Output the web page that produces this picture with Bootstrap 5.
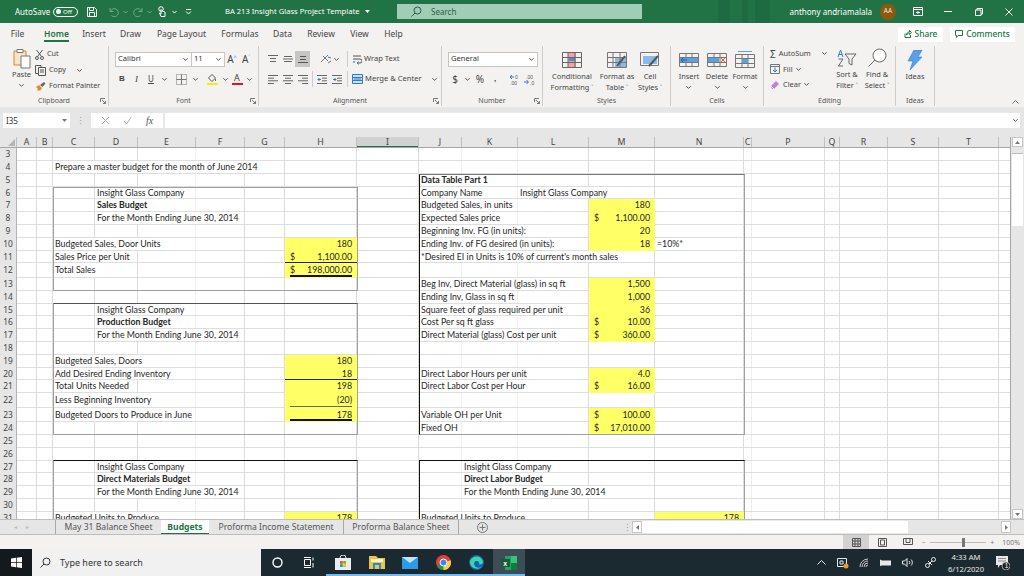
<!DOCTYPE html>
<html lang="en"><head><meta charset="utf-8"><title>BA 213 Insight Glass Project Template</title>
<link href="https://cdn.jsdelivr.net/npm/bootstrap@5.3.0/dist/css/bootstrap.min.css" rel="stylesheet">
<style>
html,body{margin:0;width:1024px;height:576px;overflow:hidden;background:#f3f2f1}
body{font-family:"Noto Sans","Liberation Sans",sans-serif;font-size:8px;color:#444;line-height:1}
svg{display:block;flex:none}
.ctr{display:flex;align-items:center;justify-content:center;white-space:nowrap}
/* title bar */
.xtitle{height:23px;background:#217346;color:#fff;padding-left:15px;display:grid;align-items:center;position:relative;
 grid-template-columns:38px 25px 28px 24px 25px 14px 10px 18px 176px 269px 234px 23px 38px 22px 40px 20px;
 background-image:linear-gradient(90deg,#1f6b41 0,#1f6b41 100%),linear-gradient(90deg,#1f6b41 0,#1f6b41 100%),linear-gradient(90deg,#1f6b41 0,#1f6b41 100%);
 background-size:12px 23px,6px 23px,15px 23px;background-position:718px 0,742px 0,755px 0;background-repeat:no-repeat}
.xtoggle{width:25px;height:10px;border:1px solid #fff;border-radius:6px;display:flex;align-items:center;padding-left:2px;gap:2px;font-size:6px}
.xknob{width:5px;height:5px;border-radius:50%;background:#fff}
.xsearch{margin-left:24px;width:245px;height:15px;background:#a0cdb6;color:#2f5d47;display:flex;align-items:center;gap:9px;padding-left:14px;font-size:8px}
.xavatar{width:16px;height:16px;border-radius:50%;background:#8a5a10;color:#f5e9d5;font-size:6.5px;margin-left:4px}
.xttl{padding-left:28px;gap:6px;justify-content:flex-start;font-size:7.6px}
/* tabs */
.xtabs{height:22px;display:flex;justify-content:space-between;align-items:center;padding-right:9px}
.xtablist{display:grid;grid-template-columns:35px 43px 32px 41px 61px 56px 29px 48px 29px 39px;font-size:8.5px;height:22px;align-items:center;justify-items:center}
.xon{font-weight:600;color:#217346;position:relative;height:22px;display:flex;align-items:center}
.xon::after{content:"";position:absolute;left:0;right:0;bottom:3px;height:2px;background:#217346}
.xbtns{display:flex;gap:7px}
.xbtn{background:#fff;color:#217346;height:15px;display:flex;align-items:center;justify-content:center;gap:3px;font-size:8.4px;font-weight:500}
.xshare{width:45px}.xcomm{width:65px}
/* ribbon */
.xrib{height:62px;display:flex;position:relative;padding-top:1px}
.xg{height:60px;border-right:1px solid #cfcdcb;display:flex;flex-direction:column;flex:none}
.xbody{height:51px}
.xlab{height:9px;text-align:center;font-size:7px;color:#555;position:relative}
.xlaunch{position:absolute;right:2px;top:1px}
.g1{width:109px}.g2{width:150px}.g3{width:183px}.g4{width:101px}.g5{width:128px}.g6{width:93px}.g7{width:132px}.g8{width:39px}
.xclip{display:grid;grid-template-columns:35px 1fr}
.xpaste{display:flex;flex-direction:column;align-items:center;padding:2px 0 0 8px;font-size:7.4px;gap:2px}
.xclipr{display:grid;grid-auto-rows:16px;align-items:center;font-size:7.3px}
.xci{display:flex;align-items:center;gap:3px;white-space:nowrap}
.xrows{padding:5px 0 0 6px;display:grid;grid-template-rows:16px 16px;row-gap:4px;align-content:start}
.xr{display:grid;align-items:center;justify-items:center}
.f1{grid-template-columns:76px 34px 14px 14px}
.f2{grid-template-columns:14px 15px 14px 12px 2px 18px 10px 3px 18px 8px 16px 8px}
.a1,.a2{grid-template-columns:15px 15px 15px 4px 15px 16px 2px 1px 5px 1fr}
.a1o{grid-column:5/7;display:flex;align-items:center;gap:2px}
.n1{grid-template-columns:90px}
.n2{grid-template-columns:14px 10px 16px 14px 6px 15px 14px}
.xsel{width:100%;height:15px;background:#fff;border:1px solid #c8c6c4;display:flex;align-items:center;justify-content:space-between;padding:0 3px 0 2px;font-size:7.6px;color:#333}
.f1 .xsel:first-child{border-right:0}
.xb{font-weight:700;font-family:"Liberation Sans",sans-serif;font-size:8px;color:#444}
.xi{font-style:italic;font-family:"Liberation Serif",serif;font-size:9px}
.xu{text-decoration:underline;font-size:8px}
.xa{font-size:10px;color:#444}
.xa small{font-size:5.5px;color:#2b7cd3;vertical-align:4px}
.xpick{display:flex;flex-direction:column;align-items:center;font-size:9px;line-height:9px;color:#444;width:12px}
.xpick i{display:block;width:11px;height:2px;margin-top:1px}
.xye{background:#ffeb00}.xre{background:#e81123}
.xsbox{background:#c8c6c4;width:15px;height:16px;display:flex;align-items:center;justify-content:center}
.xtxt{display:flex;align-items:center;gap:2px;white-space:nowrap;font-size:7.6px;justify-self:start;margin-left:-1px}
.xvline{width:1px;height:16px;background:#cfcdcb}
.xcols{display:grid;padding-top:2px;justify-items:center;align-content:start}
.c5{grid-template-columns:58px 32px 34px}.c6{grid-template-columns:36px 20px 36px}.c7r{display:grid;grid-template-columns:68px 30px 30px;align-content:start}.c8{grid-template-columns:38px}
.xcol{display:flex;flex-direction:column;align-items:center;font-size:7.4px;line-height:11px;white-space:nowrap;padding-top:2px}
.xico{height:20px;display:flex;align-items:center;justify-content:center;margin-bottom:1px}
.xedit{display:grid;grid-auto-rows:15.5px;padding-left:6px;font-size:7.4px;align-items:center;justify-items:start}
.xcoll{position:absolute;right:5px;bottom:3px}
/* formula bar */
.xfx{height:30px;background:#e6e6e6;padding:6px 4px 9px 3px;display:grid;grid-template-columns:67px 21px 72px 2px 1fr}
.xfbox{background:#fff;height:15px;display:flex;align-items:center;font-size:8px;color:#333;padding:0 3px}
.xname{justify-content:space-between}
.xdots{color:#999;text-align:center;line-height:15px;font-size:9px}
.xact{justify-content:space-around}
.xact em{font-family:"Liberation Serif",serif;font-size:10px;color:#555}
.xinp{grid-column:5;justify-content:flex-end;padding-right:2px}
/* sheet */
.xsheet{height:382px;display:flex;background:#e6e6e6}
.xgrid{width:1011px;height:382px;position:relative;overflow:hidden;background:#fff;font-family:Lato,"Liberation Sans",sans-serif;font-size:8.8px;color:#262626;flex:none;border-right:1px solid #a6a6a6}
.xrw{--c:17px 20px 16px 42px 43px 58px 49px 40px 72px 62px 43px 56px 71px 66px 89px 8px 73px 15px 48px 51px 60px 12px;
 display:grid;grid-template-columns:var(--c);grid-template-rows:1fr;height:12.8px;border-bottom:1px solid #dedede;
 --s:#dcdcdc;--f:#efefef;
 background:
 linear-gradient(var(--s),var(--s)) 36px 0/1px 100% no-repeat,linear-gradient(var(--s),var(--s)) 52px 0/1px 100% no-repeat,
 linear-gradient(var(--s),var(--s)) 94px 0/1px 100% no-repeat,linear-gradient(var(--s),var(--s)) 137px 0/1px 100% no-repeat,
 linear-gradient(var(--f),var(--f)) 195px 0/1px 100% no-repeat,linear-gradient(var(--s),var(--s)) 244px 0/1px 100% no-repeat,
 linear-gradient(var(--s),var(--s)) 284px 0/1px 100% no-repeat,linear-gradient(var(--s),var(--s)) 356px 0/1px 100% no-repeat,
 linear-gradient(var(--s),var(--s)) 418px 0/1px 100% no-repeat,linear-gradient(var(--f),var(--f)) 461px 0/1px 100% no-repeat,
 linear-gradient(var(--f),var(--f)) 517px 0/1px 100% no-repeat,linear-gradient(var(--s),var(--s)) 588px 0/1px 100% no-repeat,
 linear-gradient(var(--s),var(--s)) 654px 0/1px 100% no-repeat,linear-gradient(var(--s),var(--s)) 743px 0/1px 100% no-repeat,
 linear-gradient(var(--f),var(--f)) 751px 0/1px 100% no-repeat,linear-gradient(var(--s),var(--s)) 824px 0/1px 100% no-repeat,
 linear-gradient(var(--s),var(--s)) 839px 0/1px 100% no-repeat,linear-gradient(var(--s),var(--s)) 887px 0/1px 100% no-repeat,
 linear-gradient(var(--s),var(--s)) 938px 0/1px 100% no-repeat,linear-gradient(var(--s),var(--s)) 998px 0/1px 100% no-repeat}
.xrw>*{grid-row:1;line-height:11.8px;white-space:nowrap}
.xtall{height:14.5px}
.xtall>*{line-height:13.5px}
.xhead{height:11.3px;background:#e6e6e6;border-bottom:1px solid #a6a6a6;color:#444;font-family:"Noto Sans",sans-serif;font-size:8.8px}
.xhead>*{line-height:10.3px;text-align:center;border-right:1px solid #c0c0c0}
.xcorn{position:relative}
.xcorn::after{content:"";position:absolute;right:1px;bottom:1px;border-style:solid;border-width:0 0 7px 7px;border-color:transparent transparent #b4b4b4 transparent}
.xselh{background:#d2d2d2;box-shadow:inset 0 -1px 0 #217346}
.xn{grid-column:1;background:#e6e6e6;border-right:1px solid #b4b4b4;text-align:center;color:#444;font-family:"Noto Sans",sans-serif;font-size:8.4px;margin-bottom:-1px}
.xt{padding:0 2px;background:#fff;justify-self:start}
.cC{grid-column:4}.cD{grid-column:5}.cH{grid-column:9}.cJ{grid-column:11}.cK{grid-column:12}.cL{grid-column:13}.cM{grid-column:14}.cN{grid-column:15}
.xy{background:#ffff66;display:flex;justify-content:flex-end;padding:0 5px;margin-bottom:-1px;position:relative}
.xd{justify-content:space-between}
.xline{border-bottom:1px solid #222}
.xund::after{content:"";position:absolute;left:5px;right:5px;bottom:1px;height:1px;background:#666}
.xdbl::after{content:"";position:absolute;left:5px;right:5px;bottom:1px;height:2px;background:#111}
.xbox{position:absolute;border:1px solid #a0a0a0;pointer-events:none}
.b1{left:53px;top:49.7px;width:305px;height:104.6px}
.b2{left:53px;top:166.3px;width:305px;height:132px;border-top-color:#555}
.b3{left:53px;top:323px;width:305px;height:90px;border-top-color:#111}
.b4{left:419px;top:37px;width:326px;height:261.3px;border-left-color:#111;border-top-color:#777}
.b5{left:419px;top:323px;width:326px;height:90px;border-top-color:#111;border-left-color:#111}
.xvs{width:13px;height:382px;display:flex;flex-direction:column;background:#e6e6e6;padding-left:1px}
.xarrow{height:10px;width:11px;background:#fff;border:1px solid #c8c6c4;display:flex;align-items:center;justify-content:center;flex:none}
.xthumb{height:73px;width:11px;background:#fff;border-top:1px solid #bbb;margin:6px 0 auto;flex:none}
/* sheet tabs */
.xstabs{height:16px;background:#e6e6e6;border-bottom:1px solid #bdbdbd;border-top:1px solid #bdbdbd;display:flex;align-items:center;font-size:8.6px;color:#555;position:relative}
.xnavs{width:55px;display:flex;gap:9px;padding-left:14px;color:#bbb;font-size:6px}
.xst{height:14px;display:flex;align-items:center;justify-content:center;white-space:nowrap;border-left:1px solid #aaa;flex:none}
.t1{width:106px}.t2{width:48px;background:#fff;color:#217346;font-weight:700;border-left:0;box-shadow:inset 0 -1px 0 #217346}.t3{width:134px;border-left:0}.t4{width:115px}
.xplus{width:47px;border-left:1px solid #aaa;height:14px;display:flex;align-items:center;justify-content:center}
.xhs{margin-left:auto;display:flex;align-items:center;width:402px;height:13px;padding-right:13px}
.xhd{width:10px;color:#999;text-align:center;font-size:9px}
.xhtrack{flex:1;height:12px;background:#fff;display:flex}
.xharr{width:10px;height:12px;background:#fff;border:1px solid #c8c6c4;display:flex;align-items:center;justify-content:center;flex:none}
.xhg{width:93px;flex:none}
/* status */
.xstat{height:14px;background:#f3f2f1;display:flex;justify-content:flex-end;align-items:center;font-size:7px;color:#777}
.xvw{width:26px;height:14px;display:flex;align-items:center;justify-content:center}
.xvon{background:#d2d2d2}
.xzoom{display:flex;align-items:center;width:104px;padding:0 4px 0 2px;margin-left:-1px}
.xsl{flex:1;height:1px;background:#bbb;margin:0 4px;position:relative}
.xsl::after{content:"";position:absolute;left:32px;top:-4px;width:3px;height:9px;background:#777}
/* taskbar */
.xbar{height:27px;background:#1b2a30;display:grid;grid-template-columns:32px 229px 32px 33px 34px 33px 34px 33px 33px 32px 286px 21px 21px 22px 21px 22px 24px 48px 26px 8px;color:#fff;align-items:center;justify-items:center}
.xstart{background:#14191d;height:27px;width:100%;display:flex;align-items:center;justify-content:center}
.xsrch{background:#f1f1f1;height:27px;width:100%;display:flex;align-items:center;gap:9px;padding-left:8px;color:#333;font-size:9px}
.xapp{height:27px;width:100%;display:flex;align-items:center;justify-content:center;box-shadow:inset 0 -2px 0 #76b9ed}
.xapp0{height:27px;width:100%;display:flex;align-items:center;justify-content:center}
.xact1{background:#3d4d55}
.xclock{font-size:7.6px;line-height:12px;text-align:center;color:#e8e8e8;white-space:nowrap}
</style></head>
<body>
<div class="xtitle">
 <span>AutoSave</span>
 <span class="xtoggle"><span class="xknob"></span>Off</span>
 <span class="ctr"><svg width="12" height="12" viewBox="0 0 12 12" fill="none" stroke="#fff"><path d="M1.5 1.5h7l2 2v7h-9z"/><path d="M3.5 1.5v3h4v-3M3.5 10.5v-4h5v4"/></svg></span>
 <span class="ctr gap-1"><svg width="10" height="10" viewBox="0 0 10 10" fill="none" stroke="#6fa98a"><path d="M1 1v3.500h3.500M1.500 4.500a4 4 0 1 1 1 4"/></svg><svg width="5" height="4" viewBox="0 0 5 4" fill="none" stroke="#6fa98a"><path d="M.5 1l2 2 2-2"/></svg></span>
 <span class="ctr gap-1"><svg width="10" height="10" viewBox="0 0 10 10" fill="none" stroke="#6fa98a"><path d="M9 1v3.500H5.500M8.500 4.500a4 4 0 1 0-1 4"/></svg><svg width="5" height="4" viewBox="0 0 5 4" fill="none" stroke="#6fa98a"><path d="M.5 1l2 2 2-2"/></svg></span>
 <span class="ctr"><svg width="10" height="12" viewBox="0 0 10 12" fill="none" stroke="#fff"><circle cx="4" cy="3" r="2.300"/><path d="M4 3v5l-1.500-1L4 10.500h4V6L5 5"/></svg></span>
 <span class="ctr"><svg width="5" height="4" viewBox="0 0 5 4" fill="none" stroke="#fff"><path d="M.5 1l2 2 2-2"/></svg></span>
 <span class="ctr"><svg width="7" height="6" viewBox="0 0 7 6" fill="none" stroke="#fff"><path d="M1 .5h5M1 2.500l2.500 2.500L6 2.500"/></svg></span>
 <span class="ctr xttl">BA 213 Insight Glass Project Template <svg width="5" height="3" viewBox="0 0 5 3" fill="#fff"><path d="M0 0h5L2.500 3z"/></svg></span>
 <span class="xsearch"><svg width="11" height="11" viewBox="0 0 11 11" fill="none" stroke="#2f5d47"><circle cx="6.500" cy="4.500" r="3.500"/><path d="M4 7l-3.500 3.500"/></svg>Search</span>
 <span class="text-end pe-1">anthony andriamalala</span>
 <span class="ctr xavatar">AA</span>
 <span class="ctr"><svg width="10" height="9" viewBox="0 0 10 9" fill="none" stroke="#fff"><path d="M.5.500h9v8h-9zM.5 2.500h9M3 5.500h4M5 4v3"/></svg></span>
 <span class="ctr"><svg width="8" height="1" viewBox="0 0 8 1"><path d="M0 0h8v1H0z" fill="#fff"/></svg></span>
 <span class="ctr"><svg width="8" height="8" viewBox="0 0 8 8" fill="none" stroke="#fff"><path d="M.5 2h5.500v5.500H.5zM2 2V.500h5.500V6H6"/></svg></span>
 <span class="ctr"><svg width="8" height="8" viewBox="0 0 8 8" fill="none" stroke="#fff"><path d="M.5.500l7 7M7.500.500l-7 7"/></svg></span>
</div>

<div class="xtabs">
 <div class="xtablist"><span>File</span><span class="xon">Home</span><span>Insert</span><span>Draw</span><span>Page Layout</span><span>Formulas</span><span>Data</span><span>Review</span><span>View</span><span>Help</span></div>
 <div class="xbtns">
  <span class="xbtn xshare"><svg width="8" height="8" viewBox="0 0 8 8" fill="none" stroke="#217346"><path d="M1 3.500v4h5.500V5M2.500 5c0-2 1.500-3 3-3V.500L7.500 2.700 5.500 4.500V3.200c-1.500 0-2.500.6-3 1.800z"/></svg>Share</span>
  <span class="xbtn xcomm"><svg width="8" height="8" viewBox="0 0 8 8" fill="none" stroke="#217346"><path d="M.5.500h7v5H3L1.500 7.500v-2h-1z"/></svg>Comments</span>
 </div>
</div>

<div class="xrib">
 <div class="xg g1">
  <div class="xbody xclip">
   <div class="xpaste">
    <svg width="19" height="21" viewBox="0 0 19 21" fill="none"><path d="M2 3h12v14H2z" fill="#f7e3c6" stroke="#d98a2b"/><path d="M5 1.500h6v3H5z" fill="#fff" stroke="#777"/><path d="M9 8h9v12H9z" fill="#fff" stroke="#777"/></svg>
    <span>Paste</span>
    <svg class="mt-1" width="5" height="3" viewBox="0 0 5 3" fill="none" stroke="#555"><path d="M.3.300l2.200 2 2.200-2"/></svg>
   </div>
   <div class="xclipr">
    <div class="xci"><svg width="9" height="11" viewBox="0 0 9 11" fill="none" stroke="#555"><path d="M1.500 1l5 6.500M7.500 1l-5 6.500"/><circle cx="2" cy="9" r="1.500"/><circle cx="7" cy="9" r="1.500"/></svg>Cut</div>
    <div class="xci"><svg width="11" height="11" viewBox="0 0 11 11" fill="none" stroke="#555"><path d="M.5.500h5.500v8H.5z"/><path d="M3.500 2.500h7v8h-7z" fill="#f3f2f1"/><path d="M5 5h4M5 7h4"/></svg>Copy <svg class="ms-2" width="5" height="3" viewBox="0 0 5 3" fill="none" stroke="#555"><path d="M.3.300l2.200 2 2.200-2"/></svg></div>
    <div class="xci"><svg width="11" height="11" viewBox="0 0 11 11"><path d="M1 6l3-2 3 3-2 3-1-1-1 1-1-1 1-1z" fill="#e08a2b"/><path d="M5 4l4-3 1.500 1.500L7.500 6z" fill="#666"/></svg>Format Painter</div>
   </div>
  </div>
  <div class="xlab">Clipboard<svg class="xlaunch" width="6" height="6" viewBox="0 0 6 6" fill="none" stroke="#777"><path d="M.5 4V.500H5M2 2l3.500 3.500M5.500 3v2.500H3"/></svg></div>
 </div>
 <div class="xg g2">
  <div class="xbody xrows">
   <div class="xr f1"><span class="xsel">Calibri<svg width="5" height="3" viewBox="0 0 5 3" fill="none" stroke="#555"><path d="M.3.300l2.200 2 2.200-2"/></svg></span><span class="xsel">11<svg width="5" height="3" viewBox="0 0 5 3" fill="none" stroke="#555"><path d="M.3.300l2.200 2 2.200-2"/></svg></span><span class="xa">A<small>^</small></span><span class="xa">A<small>˅</small></span></div>
   <div class="xr f2"><span class="xb">B</span><span class="xi">I</span><span class="xu">U</span><svg width="5" height="3" viewBox="0 0 5 3" fill="none" stroke="#555"><path d="M.3.300l2.200 2 2.200-2"/></svg><span></span>
    <svg width="11" height="11" viewBox="0 0 11 11" fill="none" stroke="#777"><path d="M.5.500h10v10H.5z" stroke-dasharray="1 1"/><path d="M5.500.500v10M.5 5.500h10"/></svg><svg width="5" height="3" viewBox="0 0 5 3" fill="none" stroke="#555"><path d="M.3.300l2.200 2 2.200-2"/></svg><span></span>
    <span class="xpick"><svg width="10" height="8" viewBox="0 0 10 8" fill="none" stroke="#555"><path d="M5 .500l3.500 3.500L5 7.500 1.500 4z"/><path d="M8.500 5v2" stroke="#2b7cd3"/></svg><i class="xye"></i></span><svg width="5" height="3" viewBox="0 0 5 3" fill="none" stroke="#555"><path d="M.3.300l2.200 2 2.200-2"/></svg>
    <span class="xpick">A<i class="xre"></i></span><svg width="5" height="3" viewBox="0 0 5 3" fill="none" stroke="#555"><path d="M.3.300l2.200 2 2.200-2"/></svg></div>
  </div>
  <div class="xlab">Font<svg class="xlaunch" width="6" height="6" viewBox="0 0 6 6" fill="none" stroke="#777"><path d="M.5 4V.500H5M2 2l3.500 3.500M5.500 3v2.500H3"/></svg></div>
 </div>
 <div class="xg g3">
  <div class="xbody xrows">
   <div class="xr a1">
    <svg width="10" height="8" viewBox="0 0 10 8" fill="none" stroke="#666"><path d="M0 .500h10M2 3.500h6M2 6.500h6"/></svg>
    <svg width="10" height="8" viewBox="0 0 10 8" fill="none" stroke="#666"><path d="M1 1.500h8M0 4h10M1 6.500h8"/></svg>
    <span class="xsbox"><svg width="10" height="8" viewBox="0 0 10 8" fill="none" stroke="#555"><path d="M2 1.500h6M2 4.500h6M0 7.500h10"/></svg></span>
    <span></span>
    <span class="a1o"><svg width="12" height="10" viewBox="0 0 12 10" fill="none" stroke="#777"><path d="M1 8l7-7M3 2l5 5M8 9l3-2"/><path d="M8 3l3 1" stroke="#2b7cd3"/></svg><svg width="5" height="3" viewBox="0 0 5 3" fill="none" stroke="#555"><path d="M.3.300l2.200 2 2.200-2"/></svg></span>
    <span></span><span class="xvline"></span><span></span>
    <span class="xtxt"><svg width="10" height="11" viewBox="0 0 10 11" fill="none" stroke="#555"><path d="M1 2h8M1 5h7a2 2 0 0 1 0 4H5" /><path d="M6.500 7.500L5 9l1.500 1.500" stroke="#2b7cd3"/><path d="M1 8h2"/></svg>Wrap Text</span>
   </div>
   <div class="xr a2">
    <svg width="10" height="9" viewBox="0 0 10 9" fill="none" stroke="#666"><path d="M0 .500h10M0 3.200h6M0 5.800h10M0 8.500h6"/></svg>
    <svg width="10" height="9" viewBox="0 0 10 9" fill="none" stroke="#666"><path d="M0 .500h10M2 3.200h6M0 5.800h10M2 8.500h6"/></svg>
    <svg width="10" height="9" viewBox="0 0 10 9" fill="none" stroke="#666"><path d="M0 .500h10M4 3.200h6M0 5.800h10M4 8.500h6"/></svg>
    <span class="xvline"></span>
    <svg width="10" height="9" viewBox="0 0 10 9" fill="none" stroke="#666"><path d="M0 .500h10M5 3.200h5M5 5.800h5M0 8.500h10"/><path d="M4 4.500H1M2.500 3L1 4.500 2.500 6" stroke="#2b7cd3"/></svg>
    <svg width="10" height="9" viewBox="0 0 10 9" fill="none" stroke="#666"><path d="M0 .500h10M5 3.200h5M5 5.800h5M0 8.500h10"/><path d="M1 4.500h3M2.500 3L4 4.500 2.500 6" stroke="#2b7cd3"/></svg>
    <span></span><span class="xvline"></span><span></span>
    <span class="xtxt"><svg width="11" height="10" viewBox="0 0 11 10" fill="#cfe3f5" stroke="#2b7cd3"><path d="M.5.500h10v9H.5z"/><path d="M.5 3.500h10M.5 6.500h10M2 5h7"/></svg>Merge &amp; Center <svg class="ms-2" width="5" height="3" viewBox="0 0 5 3" fill="none" stroke="#555"><path d="M.3.300l2.200 2 2.200-2"/></svg></span>
   </div>
  </div>
  <div class="xlab">Alignment<svg class="xlaunch" width="6" height="6" viewBox="0 0 6 6" fill="none" stroke="#777"><path d="M.5 4V.500H5M2 2l3.500 3.500M5.500 3v2.500H3"/></svg></div>
 </div>
 <div class="xg g4">
  <div class="xbody xrows">
   <div class="xr n1"><span class="xsel">General<svg width="5" height="3" viewBox="0 0 5 3" fill="none" stroke="#555"><path d="M.3.300l2.200 2 2.200-2"/></svg></span></div>
   <div class="xr n2"><span class="xa">$</span><svg width="5" height="3" viewBox="0 0 5 3" fill="none" stroke="#555"><path d="M.3.300l2.200 2 2.200-2"/></svg><span class="xa">%</span><span class="xb">,</span><span></span>
    <svg width="14" height="11" viewBox="0 0 14 11" fill="none" stroke="#2b7cd3"><path d="M5 3H1M3 1L1 3l2 2"/><text x="6" y="5" font-size="5" fill="#555" stroke="none" font-family="Liberation Sans">0</text><text x="1" y="10.500" font-size="5" fill="#555" stroke="none" font-family="Liberation Sans">.00</text></svg>
    <svg width="14" height="11" viewBox="0 0 14 11" fill="none" stroke="#2b7cd3"><path d="M1 8h4M3.500 6L5.500 8l-2 2"/><text x="3" y="5" font-size="5" fill="#555" stroke="none" font-family="Liberation Sans">.00</text><text x="7" y="10.500" font-size="5" fill="#555" stroke="none" font-family="Liberation Sans">.0</text></svg></div>
  </div>
  <div class="xlab">Number<svg class="xlaunch" width="6" height="6" viewBox="0 0 6 6" fill="none" stroke="#777"><path d="M.5 4V.500H5M2 2l3.500 3.500M5.500 3v2.500H3"/></svg></div>
 </div>
 <div class="xg g5">
  <div class="xbody xcols c5">
   <div class="xcol"><span class="xico"><svg width="20" height="16" viewBox="0 0 20 16" fill="none"><path d="M6 .500h8v15H6z" fill="#f4a3a3"/><path d="M7 6h6v3H7z" fill="#4a90d9"/><path d="M.5.500h19v15H.5zM6 .500v15M13 .500v15M.5 5.500h19M.5 10.500h19" stroke="#666"/></svg></span><span>Conditional</span><span>Formatting ˅</span></div>
   <div class="xcol"><span class="xico"><svg width="20" height="16" viewBox="0 0 20 16" fill="none"><path d="M8 5h11v10H8z" fill="#8cb9e8"/><path d="M.5.500h19v15H.5zM6 .500v15M13 .500v15M.5 5.500h19M.5 10.500h19" stroke="#777"/><path d="M10 14l8-10" stroke="#555" stroke-width="2"/></svg></span><span>Format as</span><span>Table ˅</span></div>
   <div class="xcol"><span class="xico"><svg width="20" height="16" viewBox="0 0 20 16" fill="none"><path d="M.5.500h18v13H.5z" stroke="#777"/><path d="M3 4h14v8H3z" fill="#8cb9e8"/><path d="M9 14l9-10" stroke="#555" stroke-width="2"/></svg></span><span>Cell</span><span>Styles ˅</span></div>
  </div>
  <div class="xlab">Styles</div>
 </div>
 <div class="xg g6">
  <div class="xbody xcols c6">
   <div class="xcol"><span class="xico"><svg width="20" height="16" viewBox="0 0 20 16" fill="none"><path d="M.5 1.500h19v13H.5zM.5 5.500h19M.5 10.500h19M7 1.500v13M13 1.500v13" stroke="#777"/><path d="M1 6h18v4H1z" fill="#5ba0e0"/><path d="M8 8H2M4.500 5.500L2 8l2.500 2.500" stroke="#1f5fa8"/></svg></span><span>Insert</span><svg class="mt-1" width="5" height="3" viewBox="0 0 5 3" fill="none" stroke="#555"><path d="M.3.300l2.200 2 2.200-2"/></svg></div>
   <div class="xcol"><span class="xico"><svg width="20" height="16" viewBox="0 0 20 16" fill="none"><path d="M.5 1.500h19v13H.5zM.5 5.500h19M.5 10.500h19M7 1.500v13M13 1.500v13" stroke="#777"/><path d="M1 6h11v4H1z" fill="#5ba0e0"/><path d="M13 5l6 6M19 5l-6 6" stroke="#e8503a"/></svg></span><span>Delete</span><svg class="mt-1" width="5" height="3" viewBox="0 0 5 3" fill="none" stroke="#555"><path d="M.3.300l2.200 2 2.200-2"/></svg></div>
   <div class="xcol"><span class="xico"><svg width="20" height="18" viewBox="0 0 20 18" fill="none"><path d="M3 .500h14" stroke="#5ba0e0"/><path d="M.5 3.500h19v13H.5zM.5 7.500h19M.5 12.500h19M7 3.500v13M13 3.500v13" stroke="#777"/><path d="M7 8h6v4H7z" fill="#5ba0e0"/></svg></span><span>Format</span><svg class="mt-1" width="5" height="3" viewBox="0 0 5 3" fill="none" stroke="#555"><path d="M.3.300l2.200 2 2.200-2"/></svg></div>
  </div>
  <div class="xlab">Cells</div>
 </div>
 <div class="xg g7">
  <div class="xbody c7r">
   <div class="xedit">
    <span class="xci"><span class="xa">Σ</span>AutoSum<svg class="ms-2" width="5" height="3" viewBox="0 0 5 3" fill="none" stroke="#555"><path d="M.3.300l2.200 2 2.200-2"/></svg></span>
    <span class="xci"><svg width="10" height="10" viewBox="0 0 10 10" fill="none" stroke="#777"><path d="M.5.500h9v9h-9z"/><path d="M.5 2.500h9" /><path d="M5 3.500v4.500M3 6l2 2 2-2" stroke="#2b7cd3"/></svg>Fill<svg width="5" height="3" viewBox="0 0 5 3" fill="none" stroke="#555"><path d="M.3.300l2.200 2 2.200-2"/></svg></span>
    <span class="xci"><svg width="10" height="10" viewBox="0 0 10 10"><path d="M1 6l5-5 3 3-5 5H2z" fill="#c77fd6"/><path d="M1 6l3 3" stroke="#fff"/></svg>Clear<svg width="5" height="3" viewBox="0 0 5 3" fill="none" stroke="#555"><path d="M.3.300l2.200 2 2.200-2"/></svg></span>
   </div>
   <div class="xcol"><span class="xico"><svg width="20" height="18" viewBox="0 0 20 18" fill="none" stroke="#666"><path d="M1 8l2.500-7L6 8M2 5.500h3" stroke="#2b7cd3"/><path d="M1.500 10H6L1.500 17H6"/><path d="M8 5h11l-4 5v6l-3-1.500V10z"/></svg></span><span>Sort &amp;</span><span>Filter ˅</span></div>
   <div class="xcol"><span class="xico"><svg width="20" height="20" viewBox="0 0 20 20" fill="none" stroke="#666"><circle cx="12.500" cy="7.500" r="6.500" fill="#fff"/><path d="M8 12l-6.500 6.500"/></svg></span><span>Find &amp;</span><span>Select ˅</span></div>
  </div>
  <div class="xlab">Editing</div>
 </div>
 <div class="xg g8">
  <div class="xbody xcols c8">
   <div class="xcol"><span class="xico"><svg width="16" height="20" viewBox="0 0 16 20"><path d="M7 0h8L11 7h4L3 20l3-9H1z" fill="#5aa0e6" stroke="#2b7cd3" stroke-width=".6"/></svg></span><span>Ideas</span></div>
  </div>
  <div class="xlab">Ideas</div>
 </div>
 <svg class="xcoll" width="7" height="4" viewBox="0 0 7 4" fill="none" stroke="#666"><path d="M.5 3.500l3-3 3 3"/></svg>
</div>

<div class="xfx">
 <div class="xfbox xname">I35<svg width="5" height="3" viewBox="0 0 5 3" fill="#777"><path d="M0 0h5L2.500 3z"/></svg></div>
 <div class="xdots">⋮</div>
 <div class="xfbox xact"><svg width="9" height="9" viewBox="0 0 9 9" fill="none" stroke="#aaa"><path d="M1 1l7 7M8 1L1 8"/></svg><svg width="9" height="9" viewBox="0 0 9 9" fill="none" stroke="#aaa"><path d="M1 5l2.500 3L8 1.500"/></svg><em>fx</em></div>
 <div class="xfbox xinp"><svg width="5" height="3" viewBox="0 0 5 3" fill="none" stroke="#555"><path d="M.3.300l2.200 2 2.200-2"/></svg></div>
</div>

<div class="xsheet">
 <div class="xgrid">
  <div class="xrw xhead"><span class="xcorn"></span><span>A</span><span>B</span><span>C</span><span>D</span><span>E</span><span>F</span><span>G</span><span>H</span><span class="xselh">I</span><span>J</span><span>K</span><span>L</span><span>M</span><span>N</span><span>C</span><span>P</span><span>Q</span><span>R</span><span>S</span><span>T</span><span></span></div>
  <div class="xrw"><span class="xn">3</span></div>
  <div class="xrw"><span class="xn">4</span><span class="xt cC">Prepare a master budget for the month of June 2014</span></div>
  <div class="xrw"><span class="xn">5</span><span class="xt cJ fw-bold">Data Table Part 1</span></div>
  <div class="xrw"><span class="xn">6</span><span class="xt cD">Insight Glass Company</span><span class="xt cJ">Company Name</span><span class="xt cL">Insight Glass Company</span></div>
  <div class="xrw"><span class="xn">7</span><span class="xt cD fw-bold">Sales Budget</span><span class="xt cJ">Budgeted Sales, in units</span><span class="xy cM">180</span></div>
  <div class="xrw"><span class="xn">8</span><span class="xt cD">For the Month Ending June 30, 2014</span><span class="xt cJ">Expected Sales price</span><span class="xy xd cM"><span>$</span><span>1,100.00</span></span></div>
  <div class="xrw"><span class="xn">9</span><span class="xt cJ">Beginning Inv. FG (in units):</span><span class="xy cM">20</span></div>
  <div class="xrw"><span class="xn">10</span><span class="xt cC">Budgeted Sales, Door Units</span><span class="xy cH">180</span><span class="xt cJ">Ending Inv. of FG desired (in units):</span><span class="xy cM">18</span><span class="xt cN">=10%*</span></div>
  <div class="xrw"><span class="xn">11</span><span class="xt cC">Sales Price per Unit</span><span class="xy xd xline cH"><span>$</span><span>1,100.00</span></span><span class="xt cJ">*Desired EI in Units is 10% of current's month sales</span></div>
  <div class="xrw xtall"><span class="xn">12</span><span class="xt cC">Total Sales</span><span class="xy xd xdbl cH"><span>$</span><span>198,000.00</span></span></div>
  <div class="xrw"><span class="xn">13</span><span class="xt cJ">Beg Inv, Direct Material (glass)  in sq ft</span><span class="xy cM">1,500</span></div>
  <div class="xrw"><span class="xn">14</span><span class="xt cJ">Ending Inv, Glass in sq ft</span><span class="xy cM">1,000</span></div>
  <div class="xrw"><span class="xn">15</span><span class="xt cD">Insight Glass Company</span><span class="xt cJ">Square feet of glass required per unit</span><span class="xy cM">36</span></div>
  <div class="xrw"><span class="xn">16</span><span class="xt cD fw-bold">Production Budget</span><span class="xt cJ">Cost Per sq ft glass</span><span class="xy xd cM"><span>$</span><span>10.00</span></span></div>
  <div class="xrw"><span class="xn">17</span><span class="xt cD">For the Month Ending June 30, 2014</span><span class="xt cJ">Direct Material (glass) Cost per unit</span><span class="xy xd cM"><span>$</span><span>360.00</span></span></div>
  <div class="xrw"><span class="xn">18</span></div>
  <div class="xrw"><span class="xn">19</span><span class="xt cC">Budgeted Sales, Doors</span><span class="xy cH">180</span></div>
  <div class="xrw"><span class="xn">20</span><span class="xt cC">Add Desired Ending Inventory</span><span class="xy xline cH">18</span><span class="xt cJ">Direct Labor Hours per unit</span><span class="xy cM">4.0</span></div>
  <div class="xrw"><span class="xn">21</span><span class="xt cC">Total Units Needed</span><span class="xy cH">198</span><span class="xt cJ">Direct Labor Cost per Hour</span><span class="xy xd cM"><span>$</span><span>16.00</span></span></div>
  <div class="xrw xtall"><span class="xn">22</span><span class="xt cC">Less Beginning Inventory</span><span class="xy xund cH">(20)</span></div>
  <div class="xrw xtall"><span class="xn">23</span><span class="xt cC">Budgeted Doors to Produce in June</span><span class="xy xdbl cH">178</span><span class="xt cJ">Variable OH per Unit</span><span class="xy xd cM"><span>$</span><span>100.00</span></span></div>
  <div class="xrw"><span class="xn">24</span><span class="xt cJ">Fixed OH</span><span class="xy xd cM"><span>$</span><span>17,010.00</span></span></div>
  <div class="xrw"><span class="xn">25</span></div>
  <div class="xrw"><span class="xn">26</span></div>
  <div class="xrw"><span class="xn">27</span><span class="xt cD">Insight Glass Company</span><span class="xt cK">Insight Glass Company</span></div>
  <div class="xrw"><span class="xn">28</span><span class="xt cD fw-bold">Direct Materials Budget</span><span class="xt cK fw-bold">Direct Labor Budget</span></div>
  <div class="xrw"><span class="xn">29</span><span class="xt cD">For the Month Ending June 30, 2014</span><span class="xt cK">For the Month Ending June 30, 2014</span></div>
  <div class="xrw"><span class="xn">30</span></div>
  <div class="xrw"><span class="xn">31</span><span class="xt cC">Budgeted Units to Produce</span><span class="xy cH">178</span><span class="xt cJ">Budgeted Units to Produce</span><span class="xy cN">178</span></div>
  <div class="xbox b1"></div><div class="xbox b2"></div><div class="xbox b3"></div><div class="xbox b4"></div><div class="xbox b5"></div>
 </div>
 <div class="xvs">
  <div class="xarrow"><svg width="5" height="3" viewBox="0 0 5 3" fill="#777"><path d="M0 3h5L2.500 0z"/></svg></div>
  <div class="xthumb"></div>
  <div class="xarrow"><svg width="5" height="3" viewBox="0 0 5 3" fill="#777"><path d="M0 0h5L2.500 3z"/></svg></div>
 </div>
</div>

<div class="xstabs">
 <div class="xnavs"><span>◂</span><span>▸</span></div>
 <span class="xst t1">May 31 Balance Sheet</span><span class="xst t2">Budgets</span><span class="xst t3">Proforma Income Statement</span><span class="xst t4">Proforma Balance Sheet</span>
 <span class="xplus"><svg width="11" height="11" viewBox="0 0 11 11" fill="none" stroke="#777"><circle cx="5.500" cy="5.500" r="5"/><path d="M5.500 2.500v6M2.500 5.500h6"/></svg></span>
 <div class="xhs"><span class="xhd">⋮</span><span class="xharr"><svg width="3" height="5" viewBox="0 0 3 5" fill="#777"><path d="M3 0v5L0 2.500z"/></svg></span><div class="xhtrack"></div><div class="xhg"></div><span class="xharr"><svg width="3" height="5" viewBox="0 0 3 5" fill="#777"><path d="M0 0v5l3-2.500z"/></svg></span></div>
</div>

<div class="xstat">
 <span class="xvw xvon"><svg width="9" height="9" viewBox="0 0 9 9" fill="none" stroke="#555"><path d="M.5.500h8v8h-8zM3 .500v8M6 .500v8M.5 3h8M.5 6h8"/></svg></span>
 <span class="xvw"><svg width="9" height="9" viewBox="0 0 9 9" fill="none" stroke="#555"><path d="M.5.500h8v8h-8zM2.500 2h4v5h-4z"/></svg></span>
 <span class="xvw"><svg width="10" height="9" viewBox="0 0 10 9" fill="none" stroke="#555"><path d="M.5.500h9v6h-9zM3 .500v4h4v-4"/></svg></span>
 <div class="xzoom"><span>−</span><span class="xsl"></span><span>+</span><span class="ms-2">100%</span></div>
</div>

<div class="xbar">
 <div class="xstart"><svg width="11" height="11" viewBox="0 0 11 11" fill="#fff"><path d="M0 1.500l5-.7V5H0zM5.700.700L11 0v5H5.700zM0 5.700h5v4.500l-5-.7zM5.700 5.700H11V11l-5.300-.8z"/></svg></div>
 <div class="xsrch"><svg width="11" height="11" viewBox="0 0 11 11" fill="none" stroke="#333"><circle cx="6.500" cy="4.500" r="3.500"/><path d="M4 7l-3.500 3.500"/></svg>Type here to search</div>
 <div class="xapp0"><svg width="11" height="11" viewBox="0 0 11 11" fill="none" stroke="#fff" stroke-width="1.400"><circle cx="5.500" cy="5.500" r="4.500"/></svg></div>
 <div class="xapp0"><svg width="11" height="11" viewBox="0 0 11 11" fill="none" stroke="#fff"><path d="M.5 2.500h6v6h-6zM0 .500h7M0 10.500h7M9 .500v3M9 6v4.500"/></svg></div>
 <div class="xapp"><svg width="16" height="15" viewBox="0 0 16 15"><path d="M0 3h16v12H0z" fill="#e8edf2"/><path d="M5 3a3 3 0 0 1 6 0" fill="none" stroke="#e8edf2"/><path d="M5 6h2.800v2.800H5z" fill="#f25022"/><path d="M8.200 6H11v2.800H8.200z" fill="#7fba00"/><path d="M5 9.200h2.800V12H5z" fill="#00a4ef"/><path d="M8.200 9.200H11V12H8.200z" fill="#ffb900"/></svg></div>
 <div class="xapp"><svg width="16" height="13" viewBox="0 0 16 13"><path d="M0 0h7l2 2h7v11H0z" fill="#f0c14b"/><path d="M2 3h12v3H2z" fill="#fff3c4"/><path d="M4 7h8v6H4z" fill="#1d8fd9"/><path d="M6 9h4v4H6z" fill="#f0c14b"/></svg></div>
 <div class="xapp"><svg width="16" height="12" viewBox="0 0 16 12"><path d="M0 0h16v12H0z" fill="#2b9be8"/><path d="M0 0l8 6 8-6" fill="#bfe4fb"/></svg></div>
 <div class="xapp"><svg width="15" height="15" viewBox="0 0 15 15"><circle cx="7.500" cy="7.500" r="7.500" fill="#db4437"/><path d="M7.500 7.500L1 11.200A7.500 7.500 0 0 0 7.500 15 7.500 7.500 0 0 0 14 11z" fill="#0f9d58"/><path d="M7.500 7.500L14.700 5.300A7.500 7.500 0 0 1 7.500 15z" fill="#ffcd40"/><circle cx="7.500" cy="7.500" r="3.500" fill="#4285f4" stroke="#fff"/></svg></div>
 <div class="xapp"><svg width="15" height="15" viewBox="0 0 15 15"><circle cx="7.500" cy="7.500" r="7.500" fill="#0c66b5"/><path d="M1 8a6.500 6 0 0 1 13-1c0 2-2 2.500-4 2.500 1-2-1-4-3-3.500S4 10 7 12a5 5 0 0 0 7-2 7 7 0 0 1-13-2z" fill="#41d3a8"/></svg></div>
 <div class="xapp xact1"><svg width="16" height="14" viewBox="0 0 16 14"><path d="M4 0h12v14H4z" fill="#21a366"/><path d="M10 0h6v7h-6z" fill="#33c481"/><path d="M10 7h6v7h-6z" fill="#107c41"/><path d="M0 3h9v8H0z" fill="#185c37"/><text x="2.200" y="9.500" font-size="7" font-weight="700" fill="#fff" font-family="Liberation Sans">x</text></svg></div>
 <span></span>
 <svg width="9" height="5" viewBox="0 0 9 5" fill="none" stroke="#e8e8e8"><path d="M.5 4.500l4-4 4 4"/></svg>
 <svg width="12" height="12" viewBox="0 0 12 12"><path d="M.5 1.500h9v8h-9z" fill="none" stroke="#e8e8e8"/><path d="M3 4h3v3H3z" fill="none" stroke="#e8e8e8"/><circle cx="9" cy="9" r="2.500" fill="#f7941d"/></svg>
 <svg width="11" height="10" viewBox="0 0 11 10" fill="none" stroke="#c9c9c9"><path d="M1 9a8 8 0 0 1 8-8M3 9a6 6 0 0 1 6-6M5 9a4 4 0 0 1 4-4M7 9a2 2 0 0 1 2-2"/></svg>
 <svg width="11" height="7" viewBox="0 0 11 7"><path d="M0 .500l2 1h9v5H2l-2 .500z" fill="#e8e8e8"/></svg>
 <svg width="11" height="9" viewBox="0 0 11 9" fill="none" stroke="#e8e8e8"><path d="M.5 3h2L5 .500v8L2.500 6h-2zM7 3a2 2 0 0 1 0 3M9 1.500a4 4 0 0 1 0 6"/></svg>
 <svg width="11" height="11" viewBox="0 0 11 11" fill="none" stroke="#e8e8e8"><circle cx="2.500" cy="8.500" r="2"/><circle cx="8.500" cy="2.500" r="2"/><path d="M4 7l3-3M3 4l4 4"/></svg>
 <div class="xclock">4:33 AM<br>6/12/2020</div>
 <span class="position-relative"><svg width="14" height="14" viewBox="0 0 14 14"><path d="M0 0h12v9H4l-2 3V9H0z" fill="#e8e8e8"/><path d="M2 2.500h8M2 5h8" stroke="#666" stroke-width=".7"/><circle cx="10" cy="10" r="4" fill="#222" stroke="#e8e8e8" stroke-width=".6"/><text x="8.700" y="12.400" font-size="6.500" fill="#fff" font-family="Liberation Sans">1</text></svg></span>
 <span></span>
</div>
<script src="https://cdn.jsdelivr.net/npm/bootstrap@5.3.0/dist/js/bootstrap.bundle.min.js"></script>
</body></html>
